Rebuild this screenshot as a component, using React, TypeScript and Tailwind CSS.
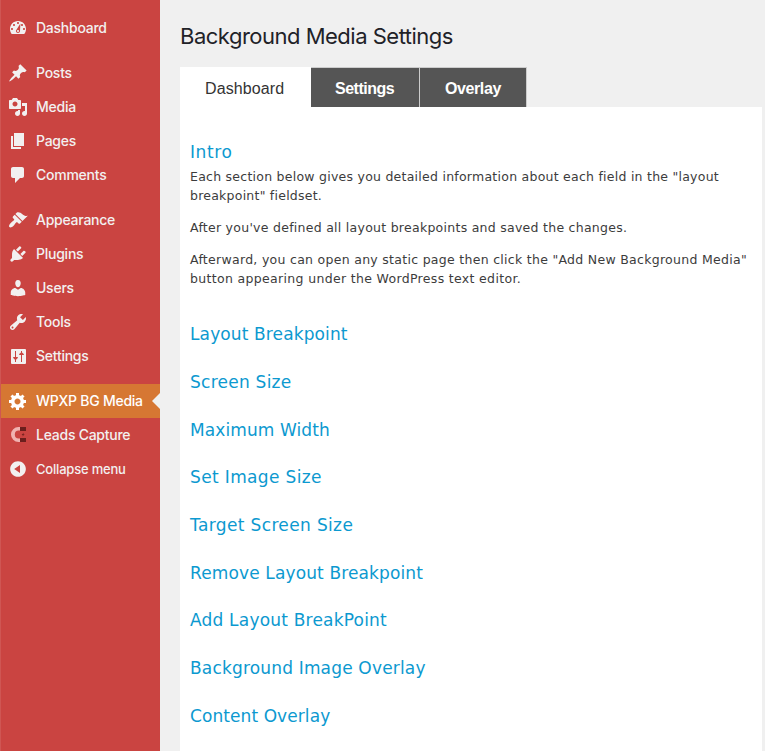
type IconName = keyof typeof paths;

const paths = {
  dashboard:
    "M3.76 16h12.48c1.1-1.37 1.76-3.11 1.76-5 0-4.42-3.58-8-8-8s-8 3.58-8 8c0 1.89.66 3.63 1.76 5zM10 4c.55 0 1 .45 1 1s-.45 1-1 1-1-.45-1-1 .45-1 1-1zM6 6c.55 0 1 .45 1 1s-.45 1-1 1-1-.45-1-1 .45-1 1-1zm8 0c.55 0 1 .45 1 1s-.45 1-1 1-1-.45-1-1 .45-1 1-1zm-1.6-.4L12 13c0 1.1-.9 2-2 2s-2-.9-2-2c0-.57.24-1.08.63-1.45zM4 10c.55 0 1 .45 1 1s-.45 1-1 1-1-.45-1-1 .45-1 1-1zm12 0c.55 0 1 .45 1 1s-.45 1-1 1-1-.45-1-1 .45-1 1-1zm-5 3c0-.55-.45-1-1-1s-1 .45-1 1 .45 1 1 1 1-.45 1-1z",
  post: "M10.44 3.02l1.82-1.82 6.36 6.35-1.83 1.82c-1.05-.68-2.48-.57-3.41.36l-.75.75c-.92.93-1.04 2.35-.35 3.41l-1.83 1.82-2.41-2.41-2.8 2.79c-.42.42-3.38 2.71-3.8 2.29s1.86-3.39 2.28-3.81l2.79-2.79L4.1 9.36l1.83-1.82c1.05.69 2.48.57 3.4-.36l.75-.75c.93-.92 1.05-2.35.36-3.41z",
  media:
    "M13 11V4c0-.55-.45-1-1-1h-1.67L9 1H5L3.67 3H2c-.55 0-1 .45-1 1v7c0 .55.45 1 1 1h10c.55 0 1-.45 1-1zM7 4.5c1.38 0 2.5 1.12 2.5 2.5S8.38 9.5 7 9.5 4.5 8.38 4.5 7 5.62 4.5 7 4.5zM14 6h5v10.5c0 1.38-1.12 2.5-2.5 2.5S14 17.88 14 16.5s1.12-2.5 2.5-2.5c.17 0 .34.02.5.05V9h-3V6zm-4 8.05V13h2v3.5c0 1.38-1.12 2.5-2.5 2.5S7 17.88 7 16.5 8.12 14 9.5 14c.17 0 .34.02.5.05z",
  page: "M6 15V2h10v13H6zm-1 1h8v2H3V5h2v11z",
  comments:
    "M5 2h9c1.1 0 2 .9 2 2v7c0 1.1-.9 2-2 2h-2l-5 5v-5H5c-1.1 0-2-.9-2-2V4c0-1.1.9-2 2-2z",
  appearance:
    "M14.48 11.06L7.41 3.99l1.5-1.5c.5-.56 2.3-.47 3.51.32 1.21.8 1.43 1.28 2.91 2.1 1.18.64 2.45 1.26 4.45.85zm-.71.71L6.7 4.7 4.93 6.47c-.39.39-.39 1.02 0 1.41l1.06 1.06c.39.39.39 1.03 0 1.42-.6.6-1.43 1.11-2.21 1.69-.35.26-.7.53-1.01.84C1.43 14.23.4 16.08 1.4 17.07c.99 1 2.84-.03 4.18-1.36.31-.31.58-.66.85-1.02.57-.78 1.08-1.61 1.69-2.21.39-.39 1.02-.39 1.41 0l1.06 1.06c.39.39 1.02.39 1.41 0z",
  plugins:
    "M13.11 4.36L9.87 7.6 8 5.73l3.24-3.24c.35-.34 1.05-.2 1.56.32.52.51.66 1.21.31 1.55zm-8 1.77l.91-1.12 9.01 9.01-1.19.84c-.71.71-2.63 1.16-3.82 1.16H6.14L4.9 17.26c-.59.59-1.54.59-2.12 0-.59-.58-.59-1.53 0-2.12l1.24-1.24v-3.88c0-1.13.4-3.19 1.09-3.89zm7.26 3.97l3.24-3.24c.34-.35 1.04-.21 1.55.31.52.51.66 1.21.31 1.55l-3.24 3.25z",
  users:
    "M10 9.25c-2.27 0-2.73-3.44-2.73-3.44C7 4.02 7.82 2 9.97 2c2.16 0 2.98 2.02 2.71 3.81 0 0-.41 3.44-2.68 3.44zM7.3 10L10 11.82 12.72 10c2.39 0 4.52 2.33 4.52 4.53v2.49s-3.65 1.13-7.24 1.13c-3.65 0-7.24-1.13-7.24-1.13v-2.49C2.76 12.28 4.9 10 7.3 10z",
  tools:
    "M16.68 9.77c-1.34 1.34-3.3 1.67-4.95.99l-5.41 6.52c-.99.99-2.59.99-3.58 0s-.99-2.59 0-3.57l6.52-5.42c-.68-1.65-.35-3.61.99-4.95 1.28-1.28 3.12-1.62 4.72-1.06l-2.89 2.89 2.82 2.82 2.86-2.87c.53 1.58.18 3.39-1.08 4.65zM3.81 16.21c.4.39 1.04.39 1.43 0 .4-.4.4-1.04 0-1.43-.39-.4-1.03-.4-1.43 0-.39.39-.39 1.03 0 1.43z",
  settings:
    "M4 3h13q1 0 1 1v13q0 1-1 1H4q-1 0-1-1V4q0-1 1-1zM7 5v6H5.2v1L7 13.8V16h1v-2.2L9.8 12v-1H8V5zM13 5v1.4L11.2 8v1H13v7h1V9h1.8V8L14 6.4V5z",
  gear: "M18 12h-2.18c-.17.7-.44 1.35-.81 1.93l1.54 1.54-2.1 2.1-1.54-1.54c-.58.36-1.23.63-1.91.79V19H8v-2.18c-.68-.16-1.33-.43-1.91-.79l-1.54 1.54-2.12-2.12 1.54-1.54c-.36-.58-.63-1.23-.79-1.91H1V9.03h2.17c.16-.7.44-1.35.8-1.94L2.43 5.55l2.1-2.1 1.54 1.54c.58-.37 1.24-.64 1.93-.81V2h3v2.18c.68.16 1.33.43 1.91.79l1.54-1.54 2.12 2.12-1.54 1.54c.36.59.64 1.24.8 1.94H18V12zm-8.5 1.5c1.66 0 3-1.34 3-3s-1.34-3-3-3-3 1.34-3 3 1.34 3 3 3z",
  collapse:
    "M10 2.16c4.33 0 7.84 3.51 7.84 7.84s-3.51 7.84-7.84 7.84S2.16 14.33 2.16 10 5.71 2.16 10 2.16zm2 11.72V6.12L6.18 9.97z",
};

function MagnetIcon() {
  return (
    <svg viewBox="0 0 20 20" className="size-5 shrink-0">
      <path d="M12 2h-1.5a7.5 7.5 0 0 0 0 15H12v-3.6h-1.3a3.9 3.9 0 0 1 0-7.8H12z" fill="#f0b3b1" />
      <path d="M12 2h6v4h-6zM12 13h6v4h-6z" fill="#6b1f1d" />
      <path d="M15.7 7.7l-2.1 2.2h1.3l-.5 1.7 2.3-2.4h-1.4z" fill="#6b1f1d" />
    </svg>
  );
}

function Icon({ name }: { name: IconName }) {
  return (
    <svg viewBox="0 0 20 20" fill="currentColor" fillRule="evenodd" className="size-5 shrink-0">
      <path d={paths[name]} />
    </svg>
  );
}

interface Item {
  label: string;
  icon: IconName | "magnet";
  text?: string;
  active?: boolean;
}

const groups: Item[][] = [
  [{ label: "Dashboard", icon: "dashboard" }],
  [
    { label: "Posts", icon: "post" },
    { label: "Media", icon: "media" },
    { label: "Pages", icon: "page" },
    { label: "Comments", icon: "comments" },
  ],
  [
    { label: "Appearance", icon: "appearance" },
    { label: "Plugins", icon: "plugins" },
    { label: "Users", icon: "users" },
    { label: "Tools", icon: "tools" },
    { label: "Settings", icon: "settings" },
  ],
  [
    { label: "WPXP BG Media", icon: "gear", active: true },
    { label: "Leads Capture", icon: "magnet" },
    { label: "Collapse menu", icon: "collapse", text: "pt-px text-[13px] font-medium tracking-[-0.2px]" },
  ],
];

const sections = [
  { title: "Layout Breakpoint", tracking: "tracking-[0.12px]" },
  { title: "Screen Size", tracking: "tracking-[0.25px]" },
  { title: "Maximum Width", tracking: "tracking-[0.1px]" },
  { title: "Set Image Size", tracking: "tracking-[0.36px]" },
  { title: "Target Screen Size", tracking: "tracking-[0.36px]" },
  { title: "Remove Layout Breakpoint", tracking: "tracking-[0.13px]" },
  { title: "Add Layout BreakPoint", tracking: "tracking-[0.2px]" },
  { title: "Background Image Overlay", tracking: "tracking-[0.17px]" },
  { title: "Content Overlay", tracking: "tracking-[0.08px]" },
];

function MenuItem({ item }: { item: Item }) {
  return (
    <li
      className={
        item.active
          ? "relative flex h-[34px] items-center gap-2 bg-[#d67733] pl-[7px] text-white"
          : "flex h-[34px] items-center gap-2 pl-[7px] text-[#f2f0f0]"
      }
    >
      {item.icon === "magnet" ? <MagnetIcon /> : <Icon name={item.icon} />}
      <span className={item.text ?? "pb-0.5 text-[14px] font-medium tracking-[-0.25px]"}>{item.label}</span>
      {item.active && (
        <span className="absolute right-0 top-[9px] border-y-8 border-r-8 border-y-transparent border-r-[#f0f0f0]" />
      )}
    </li>
  );
}

export default function App() {
  return (
    <div className="flex h-[751px] w-[765px] overflow-hidden bg-[#f0f0f0] font-[Inter,sans-serif]">
      <aside className="w-40 shrink-0 border-l border-[#cf5653] bg-[#ca4441] pt-[11px]">
        <nav className="flex flex-col gap-[11px]">
          {groups.map((group, i) => (
            <ul key={i}>
              {group.map((item) => (
                <MenuItem key={item.label} item={item} />
              ))}
            </ul>
          ))}
        </nav>
      </aside>

      <main className="flex flex-1 flex-col pl-5 pr-[3px] pt-[21px]">
        <h1 className="h-[46px] whitespace-nowrap text-[22px] leading-[30px] tracking-[-0.5px] text-[#1f2228]">
          Background Media Settings
        </h1>
        <div className="flex h-10 font-['Liberation_Sans',Arial,sans-serif] text-[16px]">
          <div className="w-[131px] bg-white pl-[25px] leading-[43px] tracking-[0.1px] text-[#333]">Dashboard</div>
          <div className="w-[109px] border-r border-t border-[#ccc] bg-[#555] pl-6 font-bold leading-[41px] tracking-[-0.5px] text-white">
            Settings
          </div>
          <div className="w-[107px] border-r border-t border-[#ccc] bg-[#555] pl-[25px] font-bold leading-[41px] tracking-[-0.4px] text-white">
            Overlay
          </div>
        </div>
        <section className="flex-1 bg-white pl-[10px] pt-[33px] font-[Verdana,'DejaVu_Sans',sans-serif]">
          <h2 className="text-[17px] leading-[24px] tracking-[0.6px] text-[#0c99d0]">Intro</h2>
          <div className="flex flex-col gap-[13px] whitespace-nowrap pt-[3px] text-[12.5px] leading-[19px] tracking-[0.27px] text-[#3c3c3c]">
            <p>
              <span className="tracking-[0.25px]">
                Each section below gives you detailed information about each field in the "layout
              </span>
              <br />
              <span className="tracking-[0.24px]">breakpoint" fieldset.</span>
            </p>
            <p>After you've defined all layout breakpoints and saved the changes.</p>
            <p>
              <span className="tracking-[0.29px]">
                Afterward, you can open any static page then click the "Add New Background Media"
              </span>
              <br />
              <span className="tracking-[0.33px]">button appearing under the WordPress text editor.</span>
            </p>
          </div>
          <div className="flex flex-col pt-[22.15px] text-[17px] leading-[24px] text-[#0c99d0]">
            {sections.map(({ title, tracking }) => (
              <h2 key={title} className="h-[47.7px] pt-3">
                <span className={tracking}>{title}</span>
              </h2>
            ))}
          </div>
        </section>
      </main>
    </div>
  );
}
